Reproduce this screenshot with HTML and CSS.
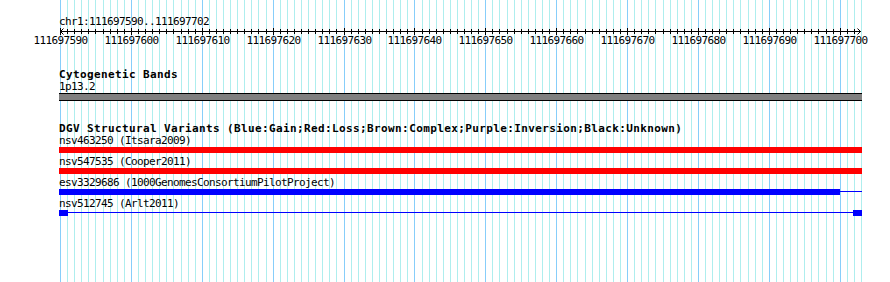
FILE: index.html
```html
<!DOCTYPE html>
<html lang="en">
<head>
  <meta charset="UTF-8">
  <meta name="viewport" content="width=device-width, initial-scale=1.0">
  <title>chr1:111697590..111697702</title>
  <link rel="stylesheet" href="styles.css">
</head>
<body>
  <div class="panel">
    <svg class="grid" id="grid" width="890" height="282"></svg>
    <div class="locus">chr1:111697590..111697702</div>
    <svg class="scale" id="scale" width="890" height="20"></svg>

    <div class="track">
      <h3>Cytogenetic Bands</h3>
      <div class="label">1p13.2</div>
      <div class="band"></div>
    </div>

    <div class="track">
      <h3>DGV Structural Variants (Blue:Gain;Red:Loss;Brown:Complex;Purple:Inversion;Black:Unknown)</h3>
      <div class="feature">
        <div class="label">nsv463250 (Itsara2009)</div>
        <div class="bar loss"></div>
      </div>
      <div class="feature">
        <div class="label">nsv547535 (Cooper2011)</div>
        <div class="bar loss"></div>
      </div>
      <div class="feature">
        <div class="label">esv3329686 (1000GenomesConsortiumPilotProject)</div>
        <div class="bar split">
          <span class="thick" style="width: 781px;"></span>
          <span class="thin"></span>
        </div>
      </div>
      <div class="feature">
        <div class="label">nsv512745 (Arlt2011)</div>
        <div class="bar split">
          <span class="cap"></span>
          <span class="thin"></span>
          <span class="cap"></span>
        </div>
      </div>
    </div>
  </div>

  <script>
    // 590..703, one line per base
    const NS = 'http://www.w3.org/2000/svg';
    const x0 = 60;
    const scale = 801 / 113;
    const grid = document.getElementById('grid');
    const ruler = document.getElementById('scale');

    function add(parent, tag, attrs, text) {
      const el = document.createElementNS(NS, tag);
      for (const k in attrs) el.setAttribute(k, attrs[k]);
      if (text) el.textContent = text;
      parent.appendChild(el);
      return el;
    }

    for (let i = 0; i <= 113; i++) {
      const x = Math.round(x0 + i * scale) + 0.5;
      const major = i % 10 === 0;
      add(grid, 'line', { x1: x, x2: x, y1: 0, y2: 282, class: major ? 'major' : 'minor' });
      if (i < 113) {
        add(ruler, 'line', { x1: x, x2: x, y1: major ? 1 : 2, y2: major ? 8 : 7 });
      }
      if (major && i <= 110) {
        add(ruler, 'text', { x: x, y: 17 }, String(111697590 + i));
      }
    }

    add(ruler, 'line', { x1: 60, x2: 861, y1: 4.5, y2: 4.5 });
    add(ruler, 'polyline', { points: '63.5,1.5 60.5,4.5 63.5,7.5' });
    add(ruler, 'polyline', { points: '857.5,1.5 860.5,4.5 857.5,7.5' });
  </script>
</body>
</html>
```

FILE: styles.css
```css
body {
  margin: 0;
  background-color: #ffffff;
}
.panel {
  position: relative;
  z-index: 0;
  width: 890px;
  height: 282px;
  padding-top: 16px;
  box-sizing: border-box;
  overflow: hidden;
  color: #000;
  font-family: "DejaVu Sans Mono", monospace;
  font-size: 11px;
  letter-spacing: -0.62px;
  line-height: 11px;
}
.grid {
  position: absolute;
  left: 0;
  top: 0;
  z-index: -1;
}
.grid line {
  stroke-width: 1;
}
.grid .minor {
  stroke: #aeeeee;
}
.grid .major {
  stroke: #87cefa;
}
.locus {
  padding-left: 59px;
  white-space: nowrap;
}
.scale {
  display: block;
}
.scale line,
.scale polyline {
  stroke: #000;
  stroke-width: 1;
  fill: none;
}
.scale text {
  font-family: "DejaVu Sans Mono", monospace;
  font-size: 11px;
  letter-spacing: -0.62px;
  text-anchor: middle;
  fill: #000;
}
.track {
  margin-top: 22px;
  padding-left: 59px;
}
h3 {
  margin: 0;
  font-size: 11px;
  font-weight: bold;
  letter-spacing: 0.38px;
  line-height: 12px;
  white-space: nowrap;
}
.label {
  white-space: nowrap;
}
.band {
  width: 803px;
  height: 6px;
  margin-top: 1px;
  background-color: #808080;
  border-top: 1px solid #000;
  border-bottom: 1px solid #000;
}
.feature {
  margin-bottom: 3px;
}
.bar {
  width: 803px;
  height: 6px;
  margin-top: 1px;
}
.bar.loss {
  background-color: #ff0000;
}
.bar.split {
  display: flex;
  align-items: flex-start;
}
.split .thick {
  height: 6px;
  background-color: #0000ff;
}
.split .thin {
  flex: 1;
  height: 1px;
  margin-top: 2px;
  background-color: #0000ff;
}
.split .cap {
  width: 9px;
  height: 6px;
  background-color: #0000ff;
}
```
